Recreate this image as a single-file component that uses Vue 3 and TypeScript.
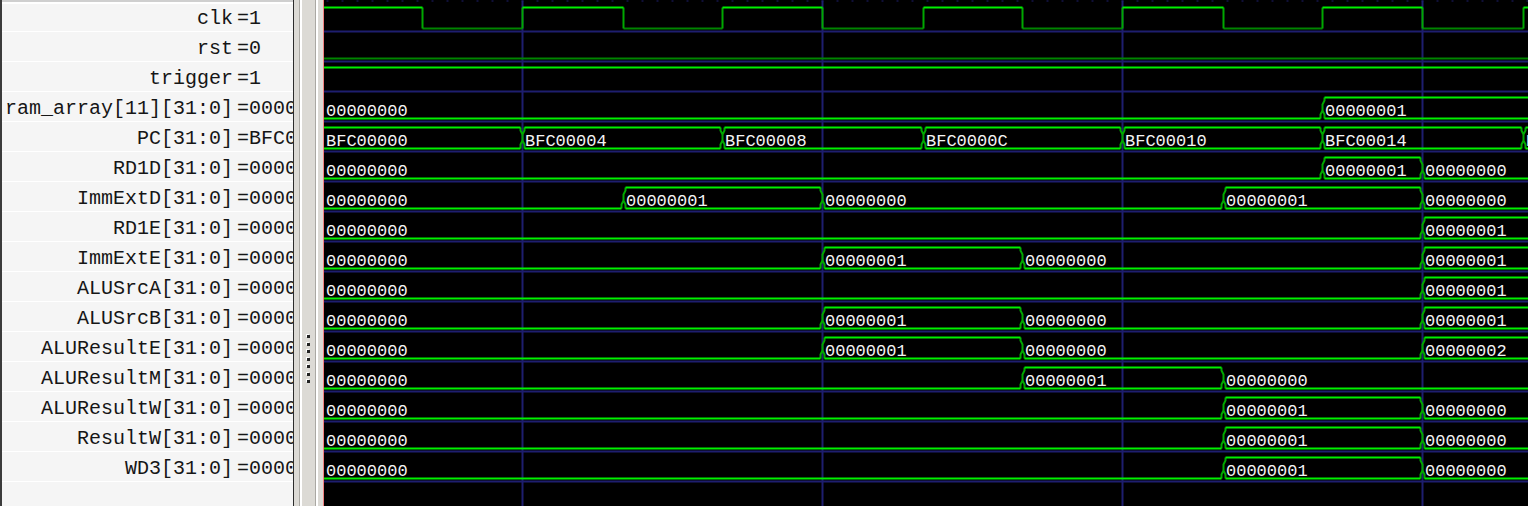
<script setup lang="ts">
interface Change {
  at: number
  value: string
}

interface Signal {
  name: string
  current: string
  kind: 'bit' | 'bus'
  changes: Change[]
}

const ROW = 30
const TOP = 2
const FAR = 6000
const ZERO = '00000000'
const ONE = '00000001'

const c = (at: number, value: string): Change => ({ at, value })

const bus = (name: string, changes: Change[], current = '0000'): Signal => ({
  name: `${name}[31:0]`,
  current,
  kind: 'bus',
  changes: [c(-10, ZERO), ...changes],
})

const signals: Signal[] = [
  {
    name: 'clk',
    current: '1',
    kind: 'bit',
    changes: [
      c(-10, '1'), c(99, '0'), c(199, '1'), c(300, '0'), c(399, '1'), c(499, '0'), c(600, '1'),
      c(699, '0'), c(799, '1'), c(900, '0'), c(999, '1'), c(1099, '0'), c(1200, '1'),
    ],
  },
  { name: 'rst', current: '0', kind: 'bit', changes: [c(-10, '0')] },
  { name: 'trigger', current: '1', kind: 'bit', changes: [c(-10, '1')] },
  bus('ram_array[11]', [c(999, ONE)]),
  {
    name: 'PC[31:0]',
    current: 'BFC0',
    kind: 'bus',
    changes: [
      c(-10, 'BFC00000'), c(199, 'BFC00004'), c(399, 'BFC00008'), c(600, 'BFC0000C'),
      c(799, 'BFC00010'), c(999, 'BFC00014'), c(1200, 'BFC00018'),
    ],
  },
  bus('RD1D', [c(999, ONE), c(1099, ZERO)]),
  bus('ImmExtD', [c(300, ONE), c(499, ZERO), c(900, ONE), c(1099, ZERO)]),
  bus('RD1E', [c(1099, ONE)]),
  bus('ImmExtE', [c(499, ONE), c(699, ZERO), c(1099, ONE)]),
  bus('ALUSrcA', [c(1099, ONE)]),
  bus('ALUSrcB', [c(499, ONE), c(699, ZERO), c(1099, ONE)]),
  bus('ALUResultE', [c(499, ONE), c(699, ZERO), c(1099, '00000002')]),
  bus('ALUResultM', [c(699, ONE), c(900, ZERO)]),
  bus('ALUResultW', [c(900, ONE), c(1099, ZERO)]),
  bus('ResultW', [c(900, ONE), c(1099, ZERO)]),
  bus('WD3', [c(900, ONE), c(1099, ZERO)]),
]

interface Stroke {
  d: string
  tone: 'bright' | 'edge' | 'low'
}

interface Label {
  x: number
  text: string
}

function strokes(s: Signal): Stroke[] {
  const out: Stroke[] = []
  s.changes.forEach((change, i) => {
    const from = change.at
    const to = s.changes[i + 1]?.at ?? FAR
    const prev = s.changes[i - 1]
    if (s.kind === 'bit') {
      const high = change.value === '1'
      out.push({ d: `M${from} ${high ? 5 : 26}H${to}`, tone: high ? 'bright' : 'low' })
      if (prev) out.push({ d: `M${from} 5V26`, tone: 'edge' })
      return
    }
    const filled = change.value !== ZERO
    const a = from + 2
    const b = to - 2
    out.push({ d: `M${a} 26H${b}`, tone: 'bright' })
    if (filled) out.push({ d: `M${a} 5H${b}`, tone: 'bright' })
    if (prev) {
      const left = prev.value !== ZERO
      const upper =
        (left ? `M${from - 2} 5V8L${from} 12V15` : '') + (filled ? `M${from + 2} 5V8L${from} 12V15` : '')
      out.push({
        d: `${upper}M${from} 15V18L${from - 2} 22V26M${from} 18L${from + 2} 22V26`,
        tone: 'edge',
      })
    }
  })
  return out.sort((p, q) => Number(p.tone === 'bright') - Number(q.tone === 'bright'))
}

function labels(s: Signal): Label[] {
  if (s.kind === 'bit') return []
  return s.changes.map((change) => ({ x: Math.max(change.at, 0) + 2, text: change.value }))
}

const rows = signals.map((s, i) => ({
  name: s.name,
  y: TOP + i * ROW,
  strokes: strokes(s),
  labels: labels(s),
}))

const gridLines = Array.from({ length: 12 }, (_, i) => 199 + i * 300)
const ticks = Array.from({ length: 260 }, (_, i) => 4 + i * 15)
</script>

<template>
  <main class="viewer">
    <section class="names" aria-label="Signals">
      <ul>
        <li v-for="s in signals" :key="s.name">
          <span class="name">{{ s.name }}</span>
          <span class="value">={{ s.current }}</span>
        </li>
      </ul>
    </section>
    <div class="splitter" role="separator" aria-orientation="vertical">
      <div class="handle"><i v-for="n in 7" :key="n"></i></div>
    </div>
    <section class="waves" aria-label="Waves">
      <svg width="100%" height="100%">
        <g class="grid">
          <line v-for="x in ticks" :key="'t' + x" :x1="x" :x2="x" y1="0" y2="1" />
          <line v-for="r in rows" :key="r.name" x1="0" x2="110%" :y1="r.y + 29" :y2="r.y + 29" />
          <line v-for="x in gridLines" :key="x" :x1="x" :x2="x" y1="0" y2="110%" />
        </g>
        <g v-for="r in rows" :key="r.name" :transform="`translate(0 ${r.y})`">
          <g class="trace">
            <path v-for="(p, i) in r.strokes" :key="i" :d="p.d" :class="p.tone" />
          </g>
          <text v-for="l in r.labels" :key="l.x" :x="l.x" y="24">{{ l.text }}</text>
        </g>
      </svg>
    </section>
  </main>
</template>

<style>
body {
  margin: 0;
  background: #000;
}
</style>

<style scoped>
.viewer {
  display: flex;
  height: 100vh;
  min-height: 484px;
  overflow: hidden;
  font-family: "Liberation Mono", "Courier New", monospace;
}

.names {
  box-sizing: border-box;
  flex: none;
  width: 294px;
  overflow: hidden;
  border-left: 2px solid #3c3c3c;
  border-right: 1px solid #2c2c2c;
  background: #f5f5f5;
  color: #161616;
}

ul {
  margin: 0;
  padding: 0;
  border-top: 2px solid #cfcfcf;
  list-style: none;
}

li {
  box-sizing: border-box;
  display: flex;
  height: 30px;
  padding-left: 3px;
  border-bottom: 1px solid #fff;
  font-size: 20px;
  line-height: 34px;
  white-space: nowrap;
}

li:first-child {
  box-shadow: inset 0 2px #fff;
}

.name {
  flex: none;
  width: 228px;
  text-align: right;
}

.value {
  padding-left: 4px;
}

.splitter {
  box-sizing: border-box;
  flex: none;
  display: flex;
  align-items: center;
  justify-content: center;
  width: 30px;
  border-right: 1px solid #f08080;
  background: linear-gradient(
    90deg,
    #dcdad5 0 5px,
    #aaa8a3 5px 6px,
    #fff 6px 8px,
    #dcdad5 8px 21px,
    #aaa8a3 21px 22px,
    #fff 22px 24px,
    #dcdad5 24px
  );
}

.handle {
  display: flex;
  flex-direction: column;
  justify-content: space-between;
  height: 48px;
  margin-top: 212px;
}

.handle i {
  width: 3px;
  height: 3px;
  background: #222;
  box-shadow: -1px -1px #fff;
}

.waves {
  flex: 1;
  min-width: 0;
  background: #000;
}

svg {
  display: block;
}

.grid line {
  stroke: #1e1e6e;
  stroke-width: 2;
}

.grid,
.trace {
  transform: translate(-0.5px, 0.5px);
}

path {
  fill: none;
  stroke-width: 2;
}

.bright {
  stroke: #00f000;
}

.edge {
  stroke: #00a800;
}

.low {
  stroke: #008400;
}

text {
  fill: #f4f4f4;
  font-size: 17px;
}
</style>
